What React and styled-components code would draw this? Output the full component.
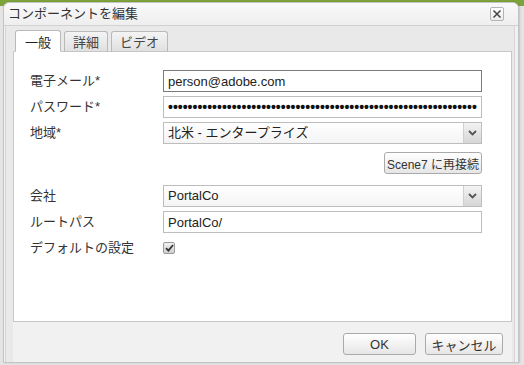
import styled, { createGlobalStyle } from "styled-components"

const font = `"Liberation Sans", "Noto Sans CJK JP", sans-serif`

const GlobalStyle = createGlobalStyle`
    html, body {
        margin: 0;
        padding: 0;
    }
    body {
        width: 524px;
        height: 365px;
        overflow: hidden;
        background: linear-gradient(#7da43a 0 6px, #e4e4e4 6px);
        font-family: ${font};
        color: #333;
    }
`

const Page = styled.div`
    padding: 2px 5px 0 3px;
    height: 365px;
    box-sizing: border-box;
`

const Dialog = styled.div`
    height: 361px;
    box-sizing: border-box;
    background: #f1f1f1;
    border: 1px solid #c4c4c4;
    border-radius: 6px 6px 0 0;
    display: flex;
    flex-direction: column;
    box-shadow: 1px 0 2px rgba(0, 0, 0, 0.15);
`

const TitleBar = styled.div`
    height: 22px;
    display: flex;
    align-items: center;
    justify-content: space-between;
    padding: 0 14px 0 4px;
    background: linear-gradient(#f9f9f9, #eeeeee);
    border-bottom: 1px solid #d2d2d2;
    border-radius: 6px 6px 0 0;
`

const Title = styled.span`
    font-size: 13px;
    line-height: 16px;
    color: #333;
`

const CloseButton = styled.button`
    width: 14px;
    height: 14px;
    padding: 0;
    border: 1px solid #b5b5b5;
    border-radius: 2px;
    background: linear-gradient(#ffffff, #ececec);
    display: flex;
    align-items: center;
    justify-content: center;
`

const Body = styled.div`
    flex: 1;
    display: flex;
    flex-direction: column;
    margin: 0 3px 0 1px;
    padding: 3px 2px 0 7px;
    border-left: 1px solid #d6d6d6;
    border-right: 1px solid #d6d6d6;
    background: #e9e9e9;
`

const TabStrip = styled.div`
    display: flex;
    gap: 3px;
    padding-left: 2px;
    height: 22px;
    align-items: flex-end;
`

const Tab = styled.div`
    height: ${p => (p.$active ? "22px" : "21px")};
    box-sizing: border-box;
    padding: 0 ${p => p.$pad}px;
    display: flex;
    align-items: center;
    font-size: 13px;
    color: ${p => (p.$active ? "#222" : "#444")};
    background: ${p => (p.$active ? "#ffffff" : "linear-gradient(#f4f4f4, #e0e0e0)")};
    border: 1px solid #b9b9b9;
    border-bottom: ${p => (p.$active ? "1px solid #fff" : "1px solid #c6c6c6")};
    border-radius: 3px 3px 0 0;
    margin-bottom: -1px;
    position: relative;
    z-index: ${p => (p.$active ? 1 : 0)};
`

const Panel = styled.div`
    height: 271px;
    box-sizing: border-box;
    background: #fff;
    border: 1px solid #c8c8c8;
    padding: 18px 0 0 16px;
`

const Form = styled.div`
    display: grid;
    grid-template-columns: 133px 319px;
    row-gap: 4px;
    align-items: center;
`

const Label = styled.label`
    font-size: 13px;
    line-height: 16px;
    color: #333;
    white-space: nowrap;
`

const TextInput = styled.input`
    width: 100%;
    height: 22px;
    box-sizing: border-box;
    border: 1px solid ${p => (p.$focus ? "#7a7a7a" : "#bdbdbd")};
    padding: 0 4px;
    font-family: ${font};
    font-size: 13px;
    color: #222;
    background: #fff;
    outline: none;
`

const Dots = styled.div`
    height: 22px;
    box-sizing: border-box;
    border: 1px solid #bdbdbd;
    padding: 0 4px;
    overflow: hidden;
    white-space: nowrap;
    font-family: "Liberation Sans", sans-serif;
    font-size: 14px;
    font-weight: bold;
    line-height: 20px;
    color: #111;
`

const Select = styled.div`
    height: 22px;
    box-sizing: border-box;
    border: 1px solid #bdbdbd;
    display: flex;
    background: linear-gradient(#ffffff, #f4f4f4);
`

const SelectValue = styled.span`
    flex: 1;
    padding: 0 4px;
    font-size: 13px;
    line-height: 20px;
    color: #222;
`

const SelectArrow = styled.span`
    width: 17px;
    display: flex;
    align-items: center;
    justify-content: center;
    border-left: 1px solid #cfcfcf;
    background: linear-gradient(#f3f3f3, #d6d6d6);
`

const RightCell = styled.div`
    grid-column: 2;
    display: flex;
    justify-content: flex-end;
    align-items: flex-start;
    height: 33px;
    box-sizing: border-box;
    padding-top: 4px;
`

const Button = styled.button`
    height: 22px;
    min-width: ${p => p.$min || 0}px;
    box-sizing: border-box;
    padding: 0 ${p => p.$pad ?? 4}px;
    border: 1px solid #aaaaaa;
    border-radius: 3px;
    background: linear-gradient(#ffffff, #e6e6e6);
    font-family: ${font};
    font-size: ${p => p.$size || 13}px;
    color: #333;
`

const Checkbox = styled.span`
    width: 12px;
    height: 12px;
    box-sizing: border-box;
    border: 1px solid #9a9a9a;
    border-radius: 2px;
    background: linear-gradient(#f2f2f2, #cfcfcf);
    display: flex;
    align-items: center;
    justify-content: center;
`

const CheckRow = styled.div`
    height: 22px;
    display: flex;
    align-items: center;
`

const Footer = styled.div`
    flex: 1;
    display: flex;
    justify-content: flex-end;
    align-items: flex-start;
    gap: 9px;
    padding: 11px 9px 0 0;
    background: #f1f1f1;
`

function Arrow() {
    return (
        <svg width="9" height="6" viewBox="0 0 9 6">
            <path d="M1 1 L4.5 4.5 L8 1" stroke="#555" strokeWidth="1.8" fill="none" />
        </svg>
    )
}

export default function App() {
    return (
        <Page>
            <GlobalStyle />
            <Dialog>
                <TitleBar>
                    <Title>コンポーネントを編集</Title>
                    <CloseButton>
                        <svg width="10" height="10" viewBox="0 0 10 10">
                            <path d="M1.5 1.5 L8.5 8.5 M8.5 1.5 L1.5 8.5" stroke="#444" strokeWidth="1.5" />
                        </svg>
                    </CloseButton>
                </TitleBar>
                <Body>
                    <TabStrip>
                        <Tab $active $pad={9}>一般</Tab>
                        <Tab $pad={8}>詳細</Tab>
                        <Tab $pad={8}>ビデオ</Tab>
                    </TabStrip>
                    <Panel>
                        <Form>
                            <Label>電子メール*</Label>
                            <TextInput $focus defaultValue="person@adobe.com" readOnly />
                            <Label>パスワード*</Label>
                            <Dots>{"•".repeat(63)}</Dots>
                            <Label>地域*</Label>
                            <Select>
                                <SelectValue>北米 - エンタープライズ</SelectValue>
                                <SelectArrow><Arrow /></SelectArrow>
                            </Select>
                            <RightCell>
                                <Button $size={12} $pad={2}>Scene7 に再接続</Button>
                            </RightCell>
                            <Label>会社</Label>
                            <Select>
                                <SelectValue>PortalCo</SelectValue>
                                <SelectArrow><Arrow /></SelectArrow>
                            </Select>
                            <Label>ルートパス</Label>
                            <TextInput defaultValue="PortalCo/" readOnly />
                            <Label>デフォルトの設定</Label>
                            <CheckRow>
                                <Checkbox>
                                    <svg width="9" height="8" viewBox="0 0 9 8">
                                        <path d="M1 4.2 L3.4 6.6 L8 1" stroke="#333" strokeWidth="1.8" fill="none" />
                                    </svg>
                                </Checkbox>
                            </CheckRow>
                        </Form>
                    </Panel>
                    <Footer>
                        <Button $min={73}>OK</Button>
                        <Button $min={78}>キャンセル</Button>
                    </Footer>
                </Body>
            </Dialog>
        </Page>
    )
}
